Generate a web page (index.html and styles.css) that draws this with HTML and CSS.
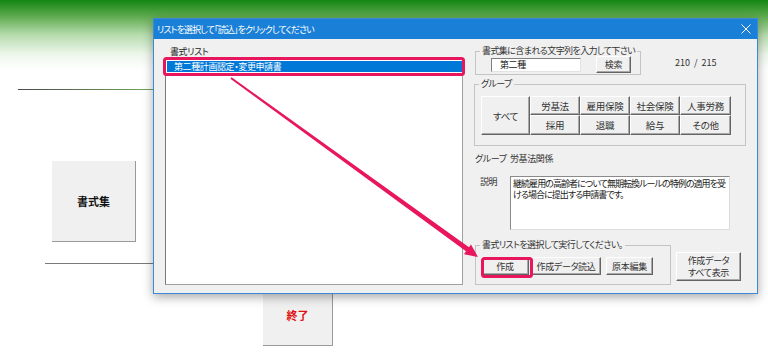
FILE: index.html
```html
<!DOCTYPE html>
<html lang="ja">
<head>
    <meta charset="UTF-8">
    <meta name="viewport" content="width=device-width, initial-scale=1.0">
    <title>書式集</title>
    <link rel="stylesheet" href="styles.css">
</head>
<body>
    <div class="banner"></div>
    <div class="rule rule-top"></div>
    <div class="menu-btn">書式集</div>
    <div class="rule rule-bottom"></div>
    <div class="menu-btn exit-btn">終了</div>

    <div class="dialog">
        <div class="title-bar">
            <span class="title-text">リストを選択して「読込」をクリックしてください</span>
            <svg class="close" width="10" height="10" viewBox="0 0 10 10">
                <path d="M0.5 0.5 L9.5 9.5 M9.5 0.5 L0.5 9.5" stroke="#fff" stroke-width="1" fill="none"/>
            </svg>
        </div>
        <div class="dialog-body">
            <div class="list-col">
                <div class="list-label">書式リスト</div>
                <div class="list-box">
                    <div class="list-item selected">第二種計画認定・変更申請書</div>
                </div>
            </div>

            <div class="side-col">
                <div class="search-row">
                    <fieldset class="group search-group">
                        <legend>書式集に含まれる文字列を入力して下さい</legend>
                        <div class="search-line">
                            <div class="text-input">第二種</div>
                            <button class="btn search-btn">検索</button>
                        </div>
                    </fieldset>
                    <div class="count">210 &nbsp;/ &nbsp;215</div>
                </div>

                <fieldset class="group filter-group">
                    <legend>グループ</legend>
                    <div class="filter-grid">
                        <button class="btn all-btn">すべて</button>
                        <button class="btn">労基法</button>
                        <button class="btn">雇用保険</button>
                        <button class="btn">社会保険</button>
                        <button class="btn">人事労務</button>
                        <button class="btn">採用</button>
                        <button class="btn">退職</button>
                        <button class="btn">給与</button>
                        <button class="btn">その他</button>
                    </div>
                </fieldset>

                <div class="info-row">
                    <span class="info-label">グループ</span>
                    <span>労基法関係</span>
                </div>

                <div class="desc-row">
                    <span class="desc-label">説明</span>
                    <div class="desc-box">継続雇用の高齢者について無期転換ルールの特例の適用を受ける場合に提出する申請書です。</div>
                </div>

                <div class="action-row">
                    <fieldset class="group action-group">
                        <legend>書式リストを選択して実行してください。</legend>
                        <div class="action-line">
                            <button class="btn make-btn">作成</button>
                            <button class="btn load-btn">作成データ読込</button>
                            <button class="btn edit-btn">原本編集</button>
                        </div>
                    </fieldset>
                    <button class="btn show-all-btn">作成データ<br>すべて表示</button>
                </div>
            </div>
        </div>
    </div>

    <svg class="annotations" width="768" height="363" viewBox="0 0 768 363">
        <rect x="164.5" y="58.5" width="299" height="16" rx="2" fill="none" stroke="#e8175d" stroke-width="3"/>
        <rect x="482.5" y="258.5" width="49" height="18" rx="2" fill="none" stroke="#e8175d" stroke-width="3"/>
        <polygon fill="#e8175d" points="230.4,78.8 466.0,251.3 464.0,254.2 478,257 471.0,244.5 469.0,247.3 231.6,77.2"/>
    </svg>
</body>
</html>
```

FILE: styles.css
```css
body {
    margin: 0;
    width: 768px;
    height: 363px;
    overflow: hidden;
    position: relative;
    background: #fff;
    font-family: "Noto Sans CJK JP", "Noto Sans", sans-serif;
    font-feature-settings: "palt";
}

/* background page */
.banner {
    height: 70px;
    background: linear-gradient(#138613 0%, #5aa84a 22%, #b7dcae 50%, #eef7ec 78%, #fff 100%);
}
.rule {
    height: 1px;
    width: 200px;
}
.rule-top {
    margin: 19px 0 0 18px;
    background: linear-gradient(90deg, #4a4a4a, #6e9e58 60%, #7cc060);
}
.rule-bottom {
    margin: 21px 0 0 45px;
    background: #7a7a7a;
}
.menu-btn {
    box-sizing: border-box;
    width: 84px;
    height: 81px;
    margin: 71px 0 0 52px;
    background: #f0f0f0;
    border-right: 1px solid #9a9a9a;
    border-bottom: 1px solid #9a9a9a;
    display: flex;
    align-items: center;
    justify-content: center;
    font-size: 11px;
    font-weight: bold;
    color: #111;
}
.exit-btn {
    width: 70px;
    height: 62px;
    margin: 20px 0 0 263px;
    color: #e01010;
}

/* dialog window */
.dialog {
    position: absolute;
    left: 153px;
    top: 18px;
    width: 605px;
    height: 276px;
    box-sizing: border-box;
    border: 1px solid #3c8ad6;
    background: #f0f0f0;
    box-shadow: 0 3px 10px rgba(0, 0, 0, 0.35);
    color: #222;
    font-size: 9px;
    letter-spacing: -0.4px;
    white-space: nowrap;
}
.title-bar {
    height: 20px;
    background: #1a7fd6;
    color: #fff;
    display: flex;
    align-items: center;
    justify-content: space-between;
    padding: 0 6px 0 3px;
}
.title-text {
    letter-spacing: -0.9px;
}
.dialog-body {
    display: flex;
    gap: 11px;
    padding: 6px 0 0 11px;
}

.list-col {
    width: 298px;
}
.list-label {
    margin-top: 1px;
    padding-left: 5px;
    line-height: 12px;
}
.list-box {
    box-sizing: border-box;
    height: 227px;
    background: #fff;
    border: 1px solid #a0a0a0;
    border-top-color: #7a7a7a;
    border-left-color: #7a7a7a;
    padding: 2px 0 0 1px;
}
.list-item {
    height: 11px;
    line-height: 11px;
    padding-left: 7px;
}
.list-item.selected {
    background: #0078d7;
    color: #fff;
}

.side-col {
    width: 272px;
}

/* group boxes */
.group {
    margin: 0;
    padding: 0;
    min-width: 0;
    border: 1px solid #c4c4c4;
    box-sizing: border-box;
}
.group legend {
    margin-left: 4px;
    padding: 0 2px;
    line-height: 12px;
    color: #333;
    letter-spacing: -0.6px;
}

.btn {
    box-sizing: border-box;
    margin: 0;
    padding: 0;
    font: inherit;
    letter-spacing: -0.3px;
    white-space: nowrap;
    color: #333;
    background: #f0f0f0;
    border: 1px solid;
    border-color: #fff #646464 #646464 #fff;
    box-shadow: inset -1px -1px 0 #a8a8a8;
}

.search-row {
    display: flex;
    align-items: flex-start;
}
.search-group {
    margin-left: 1px;
    width: 166px;
    padding-bottom: 1px;
}
.search-line {
    display: flex;
    align-items: center;
    gap: 15px;
    margin-top: -1px;
    padding: 0 0 0 15px;
}
.text-input {
    box-sizing: border-box;
    width: 90px;
    height: 14px;
    line-height: 12px;
    padding-left: 8px;
    background: #fff;
    border: 1px solid #e3e3e3;
    border-top-color: #808080;
    border-left-color: #808080;
}
.search-btn {
    width: 35px;
    height: 17px;
}
.count {
    margin: 12px 0 0 34px;
    line-height: 12px;
    color: #333;
    letter-spacing: 0;
}

.filter-group {
    margin-top: 3px;
    width: 272px;
}
.filter-grid {
    display: grid;
    grid-template-columns: 49px 50px 50px 50px 51px;
    grid-template-rows: 19px 20px;
    padding: 6px 0 10px 6px;
}
.filter-grid .btn {
    font-size: 9.5px;
}
.all-btn {
    grid-row: span 2;
}

.info-row {
    margin-top: 7px;
    padding-left: 1px;
    line-height: 12px;
    display: flex;
    color: #333;
}
.info-label {
    width: 35px;
}

.desc-row {
    margin-top: 11px;
    display: flex;
}
.desc-label {
    margin-left: 6px;
    width: 30px;
    line-height: 12px;
    color: #333;
}
.desc-box {
    box-sizing: border-box;
    width: 220px;
    height: 54px;
    padding: 1px 0 1px 2px;
    line-height: 11px;
    letter-spacing: -0.95px;
    white-space: normal;
    background: #fff;
    border: 1px solid #dcdcdc;
    border-top-color: #8a8a8a;
    border-left-color: #8a8a8a;
}

.action-row {
    margin-top: 9px;
    display: flex;
    align-items: flex-start;
}
.action-group {
    margin-left: 1px;
    width: 196px;
}
.action-line {
    display: flex;
    padding: 6px 0 9px 5px;
}
.action-line .btn {
    height: 18px;
}
.make-btn {
    width: 48px;
}
.load-btn {
    width: 70px;
    margin-left: 2px;
}
.edit-btn {
    width: 47px;
    margin-left: 5px;
}
.show-all-btn {
    width: 65px;
    height: 29px;
    margin: 13px 0 0 5px;
    line-height: 12px;
}

/* annotation layer */
.annotations {
    position: absolute;
    left: 0;
    top: 0;
    pointer-events: none;
}
```
